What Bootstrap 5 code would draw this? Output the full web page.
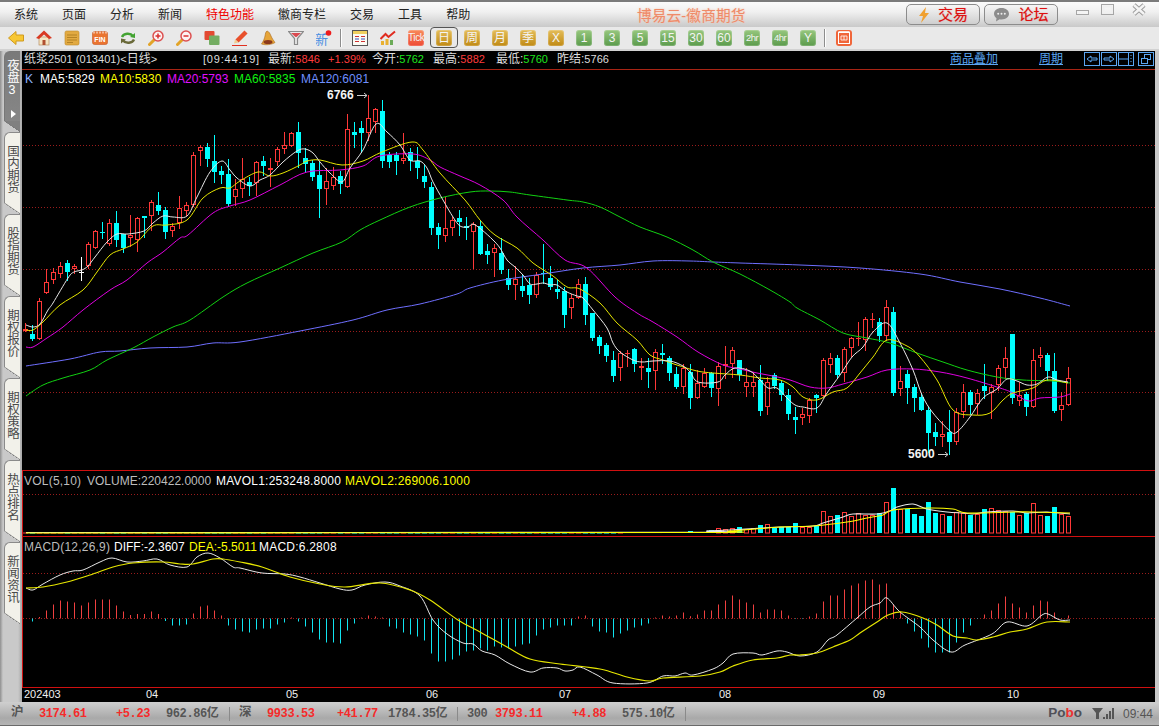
<!DOCTYPE html>
<html lang="zh-CN">
<head>
<meta charset="UTF-8">
<title>博易云-徽商期货</title>
<link href="https://cdn.jsdelivr.net/npm/bootstrap@5.3.2/dist/css/bootstrap.min.css" rel="stylesheet">
<style>
html, body { height: 100%; overflow: hidden; }
body { background: #c8c8c8; font-family: "Liberation Sans", "Noto Sans CJK SC", sans-serif; font-size: 12px; color: #222; }
.title-strip { height: 27px; border-top: 2px solid #7b7b7b; background: linear-gradient(#fbfbfb, #f0f0f0 40%, #c9c9c9); }
.menu-list { padding-left: 2px; }
.menu-list .nav-link { padding: 0 12px; color: #222; font-size: 12px; line-height: 26px; }
.menu-list .nav-link.is-red { color: #f00000; }
.brand-name { position: absolute; left: 637px; top: 3px; font-size: 14.7px; color: #ef8a68; text-shadow: 0 0 2px #f6c0a8; letter-spacing: .1px; }
.top-btn { width: 74px; height: 21px; margin-top: 2px; margin-right: 4px; border: 1px solid #8c8c8c; border-radius: 5px; background: linear-gradient(#f6f6f6, #cfcfcf); color: #dd1010; font-size: 15px; line-height: 18px; padding: 0; text-shadow: 0 0 1px rgba(221,16,16,.5); }
.win-btns { margin-left: 14px; margin-right: 9px; }
.tool-strip { height: 24px; padding: 3px 0 0 8px; background: #e9e9e9; border-bottom: 2px solid #d2d2d2; }
.tbtn { position: relative; flex: none; width: 16px; height: 16px; margin-right: 12px; display: block; }
.tkey { border-radius: 3px; color: #f4f4f4; font-size: 12px; line-height: 16px; text-align: center; box-shadow: inset 0 0 0 1px rgba(255,255,255,.18); }
.tkey-gold { background: linear-gradient(#e4bd5a, #c08a14); }
.tkey-green { background: linear-gradient(#97c77e, #5b9b4c); }
.tkey-red { background: linear-gradient(#f88a5c, #ee4a34); font-size: 10px; letter-spacing: -.4px; }
.tkey-small { font-size: 9.5px; letter-spacing: -.5px; }
.tkey-on::after { content: ""; position: absolute; inset: -3px -6px -2px -6px; border: 1px solid #555; border-radius: 4px; }
.tsep { flex: none; width: 2px; height: 18px; margin: -1px 10px 0 -4px; background: #8d8d8d; border-right: 1px solid #fff; }
.main-area { min-height: 0; padding-right: 4px; }
.side-rail { width: 22px; flex: none; padding-left: 4px; background: linear-gradient(90deg, #8f8f8f, #c9c9c9 3px, #c9c9c9 18px, #a8a8a8); }
.side-tab { position: relative; width: 16px; height: 82px; padding: 12px 2px 0 0; background: #f2f1ea; border-left: 1px solid #8a8a8a; border-top: 1px solid #8a8a8a; border-top-left-radius: 6px; color: #4a4a4a; font-size: 12.5px; line-height: 13px; writing-mode: vertical-rl; text-orientation: upright; letter-spacing: -.4px; }
.side-tab::after { content: ""; position: absolute; left: -1px; right: 0; bottom: 0; height: 11px; background: linear-gradient(to top right, #c9c9c9 49%, #777 50%, #f2f1ea 56%); }
.side-tab.is-night { height: 81px; padding-top: 7px; background: linear-gradient(#7a7a7a, #888); color: #fff; border-color: #777; }
.side-tab.is-night::after { background: linear-gradient(to top right, #c9c9c9 49%, #777 50%, #808080 56%); }
.rail-arrow { position: absolute; left: 6px; top: 58px; width: 0; height: 0; border-left: 5px solid #fff; border-top: 4px solid transparent; border-bottom: 4px solid transparent; }
.chart-pane { background: #000; min-width: 0; }
.quote-row { height: 18px; flex: none; color: #ddd; font-size: 12px; line-height: 17px; white-space: nowrap; }
.quote-row .num { font-size: 11px; letter-spacing: .05px; }
.quote-row .num-wide { font-size: 11px; letter-spacing: .8px; }
.q-name { width: 181px; padding-left: 2px; }
.q-time { width: 65px; }
.q-a { width: 60px; }
.q-b { width: 44px; }
.q-open { width: 61px; }
.q-high { width: 63px; }
.q-low { width: 61px; }
.q-red { color: #ff3c3c; }
.q-green { color: #1ee61e; }
.q-link { color: #5ba6f2; text-decoration: underline; font-size: 12px; }
.q-add { margin-left: auto; margin-right: 41px; }
.q-cycle { margin-right: 21px; }
.q-boxes { margin-top: 1px; margin-right: 1px; height: 15px; }
.q-boxes svg { display: block; margin-right: 1px; }
.q-boxes svg:last-child { margin-left: 3px; margin-right: 0; }
.k-canvas { display: block; flex: none; }
.k-canvas text { font-family: "Liberation Sans", sans-serif; font-size: 12px; }
.k-canvas text.tight { font-size: 11px; }
.k-canvas text.wide { letter-spacing: .22px; }
.status-strip { height: 24px; flex: none; padding-left: 11px; background: linear-gradient(#cfcfcf, #a9a9a9 70%, #b5b5b5); border-bottom: 1px solid #6a6a6a; color: #555; font-family: "Liberation Mono", "Noto Sans CJK SC", monospace; font-size: 12px; letter-spacing: -.4px; font-weight: 700; white-space: nowrap; }
.s-hz { font-size: 12.5px; }
.s-red { color: #f52a2a; }
.s-w28 { width: 28px; }
.s-w50 { width: 50px; }
.s-w51 { width: 51px; }
.s-w63 { width: 63px; }
.s-w69 { width: 69px; }
.s-w70 { width: 70px; }
.s-w77 { width: 77px; }
.s-sep { width: 10px; height: 14px; border-left: 1px solid #8a8a8a; }
.pobo-mark { font-family: "Liberation Sans", sans-serif; font-size: 13.5px; letter-spacing: 0; font-weight: 700; color: #505058; margin-right: 10px; }
.pobo-mark b { color: #ee3030; }
.clock-mark { font-family: "Liberation Sans", sans-serif; font-size: 12px; letter-spacing: 0; font-weight: 400; color: #555; margin: 0 6px 0 9px; }
</style>
</head>
<body>
<div class="d-flex flex-column vh-100">

  <div class="title-strip d-flex position-relative">
    <ul class="nav menu-list flex-nowrap">
      <li class="nav-item"><a class="nav-link" href="#">系统</a></li>
      <li class="nav-item"><a class="nav-link" href="#">页面</a></li>
      <li class="nav-item"><a class="nav-link" href="#">分析</a></li>
      <li class="nav-item"><a class="nav-link" href="#">新闻</a></li>
      <li class="nav-item"><a class="nav-link is-red" href="#">特色功能</a></li>
      <li class="nav-item"><a class="nav-link" href="#">徽商专栏</a></li>
      <li class="nav-item"><a class="nav-link" href="#">交易</a></li>
      <li class="nav-item"><a class="nav-link" href="#">工具</a></li>
      <li class="nav-item"><a class="nav-link" href="#">帮助</a></li>
    </ul>
    <div class="brand-name">博易云-徽商期货</div>
    <div class="ms-auto d-flex align-items-start">
      <button class="top-btn d-flex align-items-center justify-content-center gap-2" type="button">
        <svg width="12" height="16" viewBox="0 0 12 16"><polygon points="8,0 1,9 5,9 3,16 11,6 7,6" fill="#f0a030"/></svg>交易
      </button>
      <button class="top-btn d-flex align-items-center justify-content-center gap-2" type="button">
        <svg width="17" height="15" viewBox="0 0 17 15"><path d="M8.5 1C4 1 1 3.6 1 6.8c0 1.9 1 3.4 2.5 4.5L3 14.500l3.600-2.300c.6.100 1.200.200 1.900.200 4.400 0 7.500-2.500 7.500-5.600S12.900 1 8.500 1z" fill="#8c8c8c"/><circle cx="5.200" cy="6.800" r="1" fill="#eee"/><circle cx="8.500" cy="6.800" r="1" fill="#eee"/><circle cx="11.800" cy="6.800" r="1" fill="#eee"/></svg>论坛
      </button>
      <div class="win-btns d-flex">
        <svg width="74" height="18" viewBox="0 0 74 18">
          <rect x="0.500" y="8.500" width="12" height="4" fill="#f4f4f4" stroke="#a6a6a6"/>
          <rect x="25.500" y="2.500" width="12" height="10" fill="none" stroke="#a6a6a6"/>
          <rect x="27.500" y="4.500" width="8" height="6" fill="none" stroke="#f0f0f0" stroke-width="2"/>
          <path d="M58 3l10 9M68 3l-10 9" stroke="#9c9c9c" stroke-width="4.500"/>
          <path d="M58 3l10 9M68 3l-10 9" stroke="#f4f4f4" stroke-width="2.500"/>
        </svg>
      </div>
    </div>
  </div>

  <div class="tool-strip d-flex flex-nowrap">
    <svg class="tbtn" viewBox="0 0 16 16"><polygon points="0.500,8 8,1.500 8,5 15.500,5 15.500,11 8,11 8,14.500" fill="#f7c733" stroke="#cf9a1e"/></svg>
    <svg class="tbtn" viewBox="0 0 16 16"><rect x="3" y="7" width="10" height="8" fill="#f5e6c4" stroke="#b08050" stroke-width=".6"/><rect x="6.500" y="10" width="3" height="5" fill="#b05030"/><polygon points="8,0.500 0,8 3,9 8,4.500 13,9 16,8" fill="#d93a22"/></svg>
    <svg class="tbtn" viewBox="0 0 16 16"><rect x="1" y="1" width="14" height="14" rx="1.500" fill="#e2aa42" stroke="#c08a2a" stroke-width=".6"/><path d="M3 5h10M3 7.500h10M3 10h10M3 12.500h6" stroke="#a87820" stroke-width=".8"/></svg>
    <svg class="tbtn" viewBox="0 0 16 16"><rect x="0.500" y="1.500" width="15" height="13" rx="2" fill="#ea7430" stroke="#c85620" stroke-width=".6"/><path d="M2 1.500v2M5 1.500v2M8 1.500v2M11 1.500v2M14 1.500v2" stroke="#fff" stroke-width="1"/><text x="8" y="12" font-size="7" font-weight="700" fill="#fff" text-anchor="middle">FIN</text></svg>
    <svg class="tbtn" viewBox="0 0 16 16"><path d="M2 7a6 4.500 0 0 1 11-1" fill="none" stroke="#43a332" stroke-width="2.400"/><polygon points="15,3 15,8 10,7" fill="#43a332"/><path d="M14 9.500a6 4.500 0 0 1-11 1" fill="none" stroke="#6a6a3a" stroke-width="2.400"/><polygon points="1,13.500 1,8.500 6,9.500" fill="#6a6a3a"/></svg>
    <svg class="tbtn" viewBox="0 0 16 16"><path d="M6 10L1.500 14.500" stroke="#e2a428" stroke-width="3" stroke-linecap="round"/><circle cx="10" cy="6" r="5" fill="#fdf2f2" stroke="#dc5050" stroke-width="1.500"/><path d="M7.500 6h5M10 3.500v5" stroke="#d83030" stroke-width="1.500"/></svg>
    <svg class="tbtn" viewBox="0 0 16 16"><path d="M6 10L1.500 14.500" stroke="#e2a428" stroke-width="3" stroke-linecap="round"/><circle cx="10" cy="6" r="5" fill="#fdf2f2" stroke="#dc5050" stroke-width="1.500"/><path d="M7.500 6h5" stroke="#d83030" stroke-width="1.500"/></svg>
    <svg class="tbtn" viewBox="0 0 16 16"><rect x="0.500" y="1" width="10" height="9" rx="1" fill="#e34a32"/><rect x="5" y="5.500" width="10.500" height="9.500" rx="1" fill="#74ad62"/></svg>
    <svg class="tbtn" viewBox="0 0 16 16"><path d="M14 2L5 11" stroke="#e8502c" stroke-width="4.500"/><polygon points="2,13.500 3,9.500 6.500,12.500" fill="#f0cc90"/><path d="M0 15.500h15" stroke="#e03020" stroke-width="1"/></svg>
    <svg class="tbtn" viewBox="0 0 16 16"><path d="M7 1c2 .5 3 2.500 4 5s3 5 4 6.500c-3 2-9 3-13.500 1.500C3.500 11 4.500 8.500 5 6s.5-4 2-5z" fill="#e6a53a" stroke="#a8681c" stroke-width=".6"/><ellipse cx="8" cy="12" rx="4.500" ry="2" fill="#8c3a1c"/></svg>
    <svg class="tbtn" viewBox="0 0 16 16"><path d="M0.500 1.500h15L9.500 8.500v6h-3v-6z" fill="#e9e9e9" stroke="#8a8a8a" stroke-width="1.200"/><path d="M3 3h10L8.500 7h-1z" fill="#d94a50"/></svg>
    <svg class="tbtn" viewBox="0 0 16 16"><text x="-1" y="14" font-size="13" fill="#4a8fe2">新</text><circle cx="12.500" cy="3" r="2.800" fill="#ee1c1c"/></svg>
    <div class="tsep"></div>
    <svg class="tbtn" viewBox="0 0 16 16"><rect x="0.500" y="0.500" width="15" height="15" fill="#fbfbf4" stroke="#555"/><rect x="1" y="1" width="14" height="3" fill="#f0d060"/><path d="M3 6.500h4M9 6.500h4" stroke="#d03030"/><path d="M3 9h4M9 9h4" stroke="#3050c0"/><path d="M3 11.500h4M9 11.500h4" stroke="#d03030"/></svg>
    <svg class="tbtn" viewBox="0 0 16 16"><rect x="1" y="11" width="3" height="4" fill="#e8b030"/><rect x="5.500" y="9" width="3" height="6" fill="#e8b030"/><rect x="10" y="10" width="3" height="5" fill="#6cab58"/><path d="M0.500 9L5.500 4l3 3L15 1.500" fill="none" stroke="#e02c20" stroke-width="2"/></svg>
    <div class="tbtn tkey tkey-red">Tick</div>
    <div class="tbtn tkey tkey-gold tkey-on">日</div>
    <div class="tbtn tkey tkey-gold">周</div>
    <div class="tbtn tkey tkey-gold">月</div>
    <div class="tbtn tkey tkey-gold">季</div>
    <div class="tbtn tkey tkey-gold">X</div>
    <div class="tbtn tkey tkey-green">1</div>
    <div class="tbtn tkey tkey-green">3</div>
    <div class="tbtn tkey tkey-green">5</div>
    <div class="tbtn tkey tkey-green">15</div>
    <div class="tbtn tkey tkey-green">30</div>
    <div class="tbtn tkey tkey-green">60</div>
    <div class="tbtn tkey tkey-green tkey-small">2hr</div>
    <div class="tbtn tkey tkey-green tkey-small">4hr</div>
    <div class="tbtn tkey tkey-green">Y</div>
    <div class="tsep"></div>
    <svg class="tbtn" viewBox="0 0 16 16"><rect width="16" height="16" rx="3" fill="#f0663a"/><rect x="2.500" y="2.500" width="11" height="11" fill="none" stroke="#fff"/><path d="M2.500 1.500h11M5 6h6v4H5zM8 6v4" fill="none" stroke="#fff" stroke-width=".8"/></svg>
  </div>

  <div class="main-area d-flex flex-fill">
    <div class="side-rail">
      <div class="side-tab is-night">夜盘3<span class="rail-arrow"></span></div>
      <div class="side-tab">国内期货</div>
      <div class="side-tab">股指期货</div>
      <div class="side-tab">期权报价</div>
      <div class="side-tab">期权策略</div>
      <div class="side-tab">热点排名</div>
      <div class="side-tab">新闻资讯</div>
    </div>
    <div class="chart-pane d-flex flex-column flex-fill">
      <div class="quote-row d-flex">
        <span class="q-name">纸浆<span class="num">2501 (013401)&lt;</span>日线<span class="num">&gt;</span></span>
        <span class="q-time num-wide">[09:44:19]</span>
        <span class="q-a">最新:<span class="num q-red">5846</span></span>
        <span class="q-b num q-red">+1.39%</span>
        <span class="q-open">今开:<span class="num q-green">5762</span></span>
        <span class="q-high">最高:<span class="num q-red">5882</span></span>
        <span class="q-low">最低:<span class="num q-green">5760</span></span>
        <span>昨结:<span class="num">5766</span></span>
        <a class="q-link q-add" href="#">商品叠加</a>
        <a class="q-link q-cycle" href="#">周期</a>
        <div class="q-boxes d-flex">
          <svg width="16" height="14" viewBox="0 0 16 14"><rect x=".5" y=".5" width="15" height="13" fill="none" stroke="#5ba6f2"/><path d="M3 7l4-3v2h6v2H7v2z" fill="none" stroke="#5ba6f2"/></svg>
          <svg width="16" height="14" viewBox="0 0 16 14"><rect x=".5" y=".5" width="15" height="13" fill="none" stroke="#5ba6f2"/><path d="M13 7L9 4v2H3v2h6v2z" fill="none" stroke="#5ba6f2"/></svg>
          <svg width="16" height="14" viewBox="0 0 16 14"><rect x=".5" y=".5" width="15" height="13" fill="none" stroke="#5ba6f2"/><path d="M1 7h9M10.500 1v12M13 3v1M13 6v1M13 9v1" stroke="#5ba6f2"/></svg>
          <svg width="16" height="14" viewBox="0 0 16 14"><rect x=".5" y=".5" width="15" height="13" fill="none" stroke="#5ba6f2"/><rect x="6.500" y="2.500" width="6" height="5" fill="none" stroke="#5ba6f2"/><rect x="3.500" y="6.500" width="6" height="5" fill="#000" stroke="#5ba6f2"/></svg>
        </div>
      </div>
      <svg id="kCanvas" class="k-canvas" width="1133" height="633" viewBox="22 69 1133 633"></svg>
    </div>
  </div>

  <div class="status-strip d-flex align-items-center">
    <span class="s-w28 s-hz">沪</span><span class="s-w77 s-red">3174.61</span><span class="s-w50 s-red">+5.23</span><span class="s-w63">962.86亿</span>
    <span class="s-sep"></span>
    <span class="s-w28 s-hz">深</span><span class="s-w70 s-red">9933.53</span><span class="s-w51 s-red">+41.77</span><span class="s-w69">1784.35亿</span>
    <span class="s-sep"></span>
    <span class="s-w28">300</span><span class="s-w77 s-red">3793.11</span><span class="s-w50 s-red">+4.88</span><span class="s-w63">575.10亿</span>
    <span class="s-sep"></span>
    <span class="ms-auto pobo-mark">Po<b>b</b>o</span>
    <svg width="22" height="13" viewBox="0 0 22 13"><path d="M0 1h11L7 6v6H4V6z" fill="#555"/><rect x="11" y="10" width="2" height="2" fill="#555"/><rect x="14" y="7" width="2" height="5" fill="#555"/><rect x="17" y="4" width="2" height="8" fill="#555"/><rect x="20" y="1" width="2" height="11" fill="#555"/></svg>
    <span class="clock-mark">09:44</span>
  </div>
</div>

<script src="https://cdn.jsdelivr.net/npm/bootstrap@5.3.2/dist/js/bootstrap.bundle.min.js"></script>
<script>
// k线: 类型,最高,实体上,实体下,最低 (都是屏幕y坐标)
const candles = `r,323,329,331,331 c,325,334,339,340 r,298,301,339,339 r,269,282,293,293 r,268,272,280,283 r,262,266,274,277 c,260,263,272,280 r,264,266,269,273 w,257,272,272,280 r,242,244,266,268
r,230,231,248,248 c,222,232,233,238 r,219,223,244,245 c,211,223,240,246 c,234,234,248,252 r,215,235,238,246 r,217,218,240,251 c,216,216,218,237 r,200,202,216,230 c,192,205,211,214
c,207,210,232,238 r,223,226,231,236 r,196,208,223,228 r,202,205,211,215 r,152,155,205,206 r,145,147,151,165 c,143,147,159,166 c,135,161,172,182 c,166,171,175,183 c,159,174,204,205
r,179,189,197,205 r,158,179,189,197 c,177,182,186,195 r,161,162,183,195 c,156,161,166,175 r,158,168,170,186 r,147,149,162,165 r,132,145,149,153 r,132,133,146,146 c,122,132,153,167
c,148,158,164,172 c,160,163,177,180 c,162,175,189,217 r,168,181,189,204 r,167,177,186,189 c,171,176,184,193 r,114,129,187,187 c,122,132,135,147 c,121,128,133,152 r,95,118,133,140
r,108,109,122,132 c,100,111,161,167 c,152,155,162,167 c,152,155,161,174 r,133,158,161,163 c,148,152,161,170 c,147,161,168,178 c,165,176,182,187 c,182,187,228,234 c,223,227,235,248
r,197,228,236,241 r,217,220,228,235 c,210,218,222,235 c,217,226,228,239 r,222,224,232,268 c,220,226,254,254 c,244,251,255,263 r,244,248,253,276 c,238,253,270,273 c,269,278,285,289
r,266,279,285,299 c,274,286,291,296 c,278,285,295,303 r,272,275,295,297 c,244,273,274,283 c,266,278,287,289 c,280,289,292,298 c,287,291,315,327 r,294,298,308,318 r,279,284,298,298
c,277,284,315,324 c,313,313,338,340 c,335,337,346,353 c,343,345,356,361 c,351,360,376,381 r,351,353,368,380 r,350,353,354,366 c,348,349,364,371 r,358,366,368,379 c,358,368,372,387
r,349,352,371,389 c,344,353,355,363 c,356,358,373,380 c,367,374,387,388 r,364,368,387,393 c,364,372,398,408 r,370,383,398,398 r,368,373,387,387 c,372,373,388,396 r,362,366,389,405
r,346,364,366,378 r,347,350,364,377 c,360,360,375,380 r,368,382,387,396 r,372,382,387,396 c,365,380,411,415 r,377,382,407,414 c,373,375,386,388 c,380,383,395,400 c,389,395,414,419
c,407,417,420,433 r,408,414,418,424 r,398,400,416,422 c,394,395,398,412 r,358,360,396,396 r,353,358,365,372 c,355,358,375,377 r,347,349,373,381 r,337,338,348,356 r,322,338,339,345
r,317,319,340,350 r,313,319,320,327 c,318,322,336,341 r,300,307,336,340 c,307,312,393,395 r,366,381,389,395 c,370,374,388,403 c,384,387,398,411 c,393,397,410,410 c,407,410,433,452
c,423,432,437,445 r,421,434,437,446 c,410,432,442,454 r,408,412,442,444 r,384,392,412,417 c,390,392,405,414 r,389,393,404,414 c,364,386,391,398 r,384,387,393,418 r,365,368,385,390
r,347,358,368,378 c,334,334,398,403 r,382,395,401,405 c,392,394,407,415 r,349,360,407,407 r,347,355,358,366 c,353,355,371,380 c,353,371,411,412 r,392,405,410,420 r,367,378,405,405`
  .trim().split(/\s+/).map(s => s.split(','));

// 均线折点 x,y
const ma5 = '26,325 33,327 40,324 48,310 53,303 68,278 74,272 82,270 88,266 95,257 107,242 117,234 128,234 144,231 153,223 163,216 173,217 187,216 197,197 210,172 222,161 230,170 237,178 250,186 260,180 270,175 283,162 297,151 305,149 313,153 320,162 330,173 342,182 350,168 363,150 376,124 387,132 400,145 410,160 420,161 427,168 433,182 443,200 453,217 460,226 468,227 473,224 482,230 493,240 500,248 507,260 515,267 523,275 530,284 537,284 544,283 550,285 557,285 567,292 577,296 583,298 593,310 607,328 613,343 620,352 633,360 642,362 653,361 670,361 683,366 690,372 698,382 718,382 725,375 735,368 750,371 760,380 768,388 777,388 787,398 795,405 803,407 817,408 827,393 840,375 852,357 863,347 873,332 887,323 900,343 913,370 922,395 933,413 950,431 957,432 970,417 983,398 997,389 1007,379 1017,381 1027,385 1037,384 1048,377 1057,380 1068,382';
const ma10 = '26,330 33,330 43,322 60,305 83,290 97,272 110,255 123,249 137,242 153,226 167,225 187,220 203,198 220,188 230,188 240,181 258,172 270,176 283,173 300,165 307,161 320,160 342,165 363,161 382,152 412,142 423,150 440,173 465,200 480,220 495,235 517,248 533,263 553,276 567,287 580,289 600,303 617,323 637,340 650,355 663,360 677,365 697,371 713,373 740,375 760,378 780,380 793,387 803,397 817,400 833,392 847,388 860,373 873,357 887,340 907,346 920,357 937,380 953,410 973,415 990,413 1003,400 1013,393 1033,388 1047,380 1068,383';
const ma20 = '26,347 33,347 47,338 63,327 83,310 110,290 127,280 147,263 163,252 180,238 188,235 213,213 230,206 250,200 280,185 307,172 340,170 363,166 380,156 413,154 430,160 440,167 460,176 480,185 503,200 517,217 543,240 565,260 587,268 615,297 637,313 653,322 677,337 698,352 723,365 740,369 757,373 773,376 790,380 810,387 827,388 843,384 867,377 887,370 913,369 940,372 967,378 1000,388 1013,393 1028,401 1040,398 1060,397 1070,394';
const ma60 = '26,396 43,385 63,378 90,370 107,360 133,348 153,337 173,327 190,320 223,297 247,283 280,268 313,253 342,242 360,230 380,220 410,207 440,198 470,192 490,191 510,192 530,195 567,200 583,202 600,207 620,217 640,227 667,237 693,250 713,262 740,274 770,290 790,302 797,308 820,320 843,333 867,338 890,343 917,353 943,362 967,370 997,377 1023,380 1053,381 1070,383';
const ma120 = '26,366 70,359 100,352 120,351 150,348 187,347 213,343 240,342 300,331 353,320 387,310 420,304 457,294 470,288 503,280 543,274 583,268 620,265 653,261 690,261 713,262 740,263 800,265 860,268 920,274 960,282 1000,289 1040,298 1070,306';

// 成交量柱顶 (从i=95开始)
const volTop = [531,532,532,530,528,529,528,527,529,528,525,524,528,527,527,523,527,527,526,511,516,515,512,516,513,515,515,513,502,488,509,509,514,516,502,513,514,516,512,513,515,514,509,508,510,511,512,515,513,503,515,516,507,514,516];

// MACD柱高 (向上为正)
const macdBar = [0,-3,1.5,8,14,18,17,16,13,16,19,19,19,13,7,3.5,4.5,4.5,7,4.5,-2.5,-7,-7,-6,5,12,13,8,3,-7,-11,-13,-14,-11,-10,-10,-6,-4,1,-3,-8,-14,-21,-24,-24,-25,-12,-5,1,3,2,1,-8,-10,-14,-16,-18,-22,-35,-43,-43,-41,-37,-33,-32,-30,-32,-28,-29,-30,-28,-26,-25,-17,-11,-9,-7,-7,-7,2,3,-8,-13,-14,-19,-15,-12,-9,-7,-5,1,3,2,3,6,2.3,4,8,8,14,18,23,19,16,14,6,9,9,8,3,-.5,-.5,2,5,17,23,23,29,33,35,38,39,34,35,14,7,-5,-13,-20,-29,-34,-34,-34,-24,-14,-7,-.5,4,8,15,22,15,11,6,13,18,17,6,.5,3];

const diff = '26,588 33,590 43,584 60,575 73,571 83,570 100,562 112,558 127,562 143,561 157,559 170,565 187,567 197,557 208,553 220,558 233,567 240,568 262,573 285,574 300,577 320,583 340,589 352,590 365,585 385,582 400,586 420,596 433,620 447,634 463,643 473,644 482,651 495,655 510,664 530,672 543,668 557,668 565,671 573,670 580,667 597,675 613,683 647,683 663,676 675,676 685,673 693,675 713,669 723,663 733,654 753,653 762,655 777,651 787,652 800,656 817,652 828,640 837,635 857,618 870,607 880,603 887,598 900,612 920,627 933,640 951,652 965,645 992,634 1007,622 1027,626 1042,615 1048,614 1060,620 1070,620';
const dea = '26,588 43,587 67,582 90,575 113,567 133,563 163,562 180,564 193,564 213,559 223,559 240,562 262,567 290,577 320,584 345,587 380,583 410,590 430,600 458,620 480,632 507,647 530,659 560,664 600,669 627,677 650,681 663,678 700,676 720,672 733,666 753,660 777,658 790,655 800,655 817,653 833,647 850,640 860,633 877,622 888,615 902,612 923,618 937,625 953,636 967,638 977,640 993,637 1010,632 1027,629 1047,622 1070,622';

const volWhite = '26,532.500 680,532.300 707,531 730,530 763,528 780,527 813,526 823,523 843,517 853,514 877,514 890,511 897,507 913,504 927,509 947,512 963,513 973,514 987,512 1013,511 1027,513 1047,512 1070,514';
const volYellow = '26,533 680,532.500 730,531 780,527 813,526 847,522 867,518 883,515 893,510 927,508 953,509 967,513 1013,512 1033,512 1070,513';

const RED = '#ff3838', CYAN = '#00ffff';
const xAt = i => 25.5 + 7 * i;
let out = '';

// 网格
[145, 207, 269, 331, 392, 494, 573, 618].forEach(y => {
    out += `<line x1="23" x2="1155" y1="${y + .5}" y2="${y + .5}" stroke="#9a1c1c" stroke-dasharray="1 2"/>`;
});
out += `<line x1="22" x2="1155" y1="69.500" y2="69.500" stroke="#a82414"/>`;
[470, 536, 687].forEach(y => {
    out += `<line x1="22" x2="1155" y1="${y + .5}" y2="${y + .5}" stroke="#d01010"/>`;
});
out += `<line x1="22.500" x2="22.500" y1="470" y2="687" stroke="#d01010"/>`;

// 蜡烛
candles.forEach((c, i) => {
    const x = xAt(i), hi = +c[1], top = +c[2], bot = +c[3], lo = +c[4];
    const col = c[0] === 'r' ? RED : c[0] === 'c' ? CYAN : '#fff';
    out += `<line x1="${x}" x2="${x}" y1="${hi}" y2="${lo + 1}" stroke="${col}"/>`;
    if (bot - top <= 2) {
        out += `<rect x="${x - 2.5}" y="${top}" width="5" height="${Math.max(1, bot - top)}" fill="${col}"/>`;
    } else if (c[0] === 'c') {
        out += `<rect x="${x - 2.5}" y="${top}" width="5" height="${bot - top}" fill="${CYAN}"/>`;
    } else {
        out += `<rect x="${x - 2}" y="${top + .5}" width="4" height="${bot - top - 1}" fill="#000" stroke="${col}"/>`;
    }
});

// 折点连成平滑曲线
function line(str, col, w) {
    const p = str.split(' ').map(s => s.split(',').map(Number));
    let d = `M${p[0][0]} ${p[0][1]}`;
    for (let i = 0; i < p.length - 1; i++) {
        const a = p[Math.max(i - 1, 0)], b = p[i], c = p[i + 1], e = p[Math.min(i + 2, p.length - 1)];
        const c1x = b[0] + (c[0] - a[0]) / 6, c1y = b[1] + (c[1] - a[1]) / 6;
        const c2x = c[0] - (e[0] - b[0]) / 6, c2y = c[1] - (e[1] - b[1]) / 6;
        d += `C${c1x.toFixed(1)} ${c1y.toFixed(1)} ${c2x.toFixed(1)} ${c2y.toFixed(1)} ${c[0]} ${c[1]}`;
    }
    return `<path d="${d}" fill="none" stroke="${col}" stroke-width="${w}"/>`;
}
out += line(ma120, '#6f6fff', 1) + line(ma60, '#12d212', 1) + line(ma20, '#e000e0', 1) + line(ma10, '#e6e600', 1) + line(ma5, '#e8e8e8', 1);

// 成交量
candles.forEach((c, i) => {
    const x = xAt(i), isRed = c[0] !== 'c';
    const top = i >= 95 ? volTop[i - 95] : (i > 85 ? 532 : 532.500);
    const h = 533 - top;
    if (isRed && h > 2) {
        out += `<rect x="${x - 2}" y="${top + .5}" width="4" height="${h - .5}" fill="#000" stroke="${RED}"/>`;
    } else {
        out += `<rect x="${x - 2.5}" y="${top}" width="5" height="${Math.max(h, 1)}" fill="${isRed ? RED : CYAN}"/>`;
    }
});
out += line(volWhite, '#e8e8e8', 1.1) + line(volYellow, '#ffff00', 1.1);

// MACD柱
macdBar.forEach((v, i) => {
    if (!v) return;
    const x = xAt(i);
    out += `<line x1="${x}" x2="${x}" y1="618.500" y2="${618.5 - v}" stroke="${v > 0 ? '#f04040' : '#10e4f0'}"/>`;
});
out += line(diff, '#e8e8e8', 1) + line(dea, '#e6e600', 1.2);

// 文字
const label = (x, y, col, txt, extra) => `<text x="${x}" y="${y}" fill="${col}" ${extra || ''}>${txt}</text>`;
const wide = 'class="wide"';
out += label(25, 83, '#8fb4ff', 'K');
out += label(40, 83, '#ffffff', 'MA5:5829') + label(100, 83, '#ffff00', 'MA10:5830') + label(167, 83, '#e010ff', 'MA20:5793');
out += label(234, 83, '#10f010', 'MA60:5835') + label(301, 83, '#6f8fff', 'MA120:6081');
out += label(327, 99, '#f4f4f4', '6766', 'font-weight="700"') + `<path d="M357 95.500h10M364 93l3 2.500-3 2.500" fill="none" stroke="#ccc"/>`;
out += label(908, 458, '#f4f4f4', '5600', 'font-weight="700"') + `<path d="M938 454.500h10M945 452l3 2.500-3 2.500" fill="none" stroke="#ccc"/>`;
out += label(24, 485, '#bdbdbd', 'VOL(5,10)', wide) + label(87, 485, '#bdbdbd', 'VOLUME:220422.0000');
out += label(216, 485, '#ffffff', 'MAVOL1:253248.8000', wide) + label(345, 485, '#ffff00', 'MAVOL2:269006.1000', wide);
out += label(24, 551, '#bdbdbd', 'MACD(12,26,9)', wide) + label(114, 551, '#ffffff', 'DIFF:-2.3607');
out += label(189, 551, '#ffff00', 'DEA:-5.5011') + label(259, 551, '#ffffff', 'MACD:6.2808', wide);
[[24, '202403'], [146, '04'], [286, '05'], [426, '06'], [559, '07'], [719, '08'], [873, '09'], [1007, '10']].forEach(d => {
    out += label(d[0], 698, '#f0f0f0', d[1], 'class="tight"');
});

document.getElementById('kCanvas').innerHTML = out;
</script>
</body>
</html>
